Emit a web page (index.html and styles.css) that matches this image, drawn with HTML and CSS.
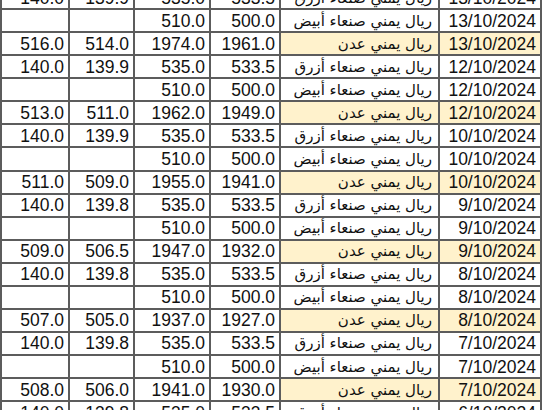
FILE: index.html
```html
<!DOCTYPE html>
<html lang="ar">
<head>
<meta charset="utf-8">
<link rel="stylesheet" href="styles.css">
</head>
<body>
<div class="sheet">
<table class="grid">
<colgroup>
<col class="c1"><col class="c2"><col class="c3"><col class="c4"><col class="c5"><col class="c6">
</colgroup>
<tbody>
<tr><td>140.0</td><td>139.9</td><td>535.0</td><td>533.5</td><td class="ar">ريال يمني صنعاء أزرق</td><td>13/10/2024</td></tr>
<tr><td></td><td></td><td>510.0</td><td>500.0</td><td class="ar">ريال يمني صنعاء أبيض</td><td>13/10/2024</td></tr>
<tr class="aden"><td>516.0</td><td>514.0</td><td>1974.0</td><td>1961.0</td><td class="ar">ريال يمني عدن</td><td>13/10/2024</td></tr>
<tr><td>140.0</td><td>139.9</td><td>535.0</td><td>533.5</td><td class="ar">ريال يمني صنعاء أزرق</td><td>12/10/2024</td></tr>
<tr><td></td><td></td><td>510.0</td><td>500.0</td><td class="ar">ريال يمني صنعاء أبيض</td><td>12/10/2024</td></tr>
<tr class="aden"><td>513.0</td><td>511.0</td><td>1962.0</td><td>1949.0</td><td class="ar">ريال يمني عدن</td><td>12/10/2024</td></tr>
<tr><td>140.0</td><td>139.9</td><td>535.0</td><td>533.5</td><td class="ar">ريال يمني صنعاء أزرق</td><td>10/10/2024</td></tr>
<tr><td></td><td></td><td>510.0</td><td>500.0</td><td class="ar">ريال يمني صنعاء أبيض</td><td>10/10/2024</td></tr>
<tr class="aden"><td>511.0</td><td>509.0</td><td>1955.0</td><td>1941.0</td><td class="ar">ريال يمني عدن</td><td>10/10/2024</td></tr>
<tr><td>140.0</td><td>139.8</td><td>535.0</td><td>533.5</td><td class="ar">ريال يمني صنعاء أزرق</td><td>9/10/2024</td></tr>
<tr><td></td><td></td><td>510.0</td><td>500.0</td><td class="ar">ريال يمني صنعاء أبيض</td><td>9/10/2024</td></tr>
<tr class="aden"><td>509.0</td><td>506.5</td><td>1947.0</td><td>1932.0</td><td class="ar">ريال يمني عدن</td><td>9/10/2024</td></tr>
<tr><td>140.0</td><td>139.8</td><td>535.0</td><td>533.5</td><td class="ar">ريال يمني صنعاء أزرق</td><td>8/10/2024</td></tr>
<tr><td></td><td></td><td>510.0</td><td>500.0</td><td class="ar">ريال يمني صنعاء أبيض</td><td>8/10/2024</td></tr>
<tr class="aden"><td>507.0</td><td>505.0</td><td>1937.0</td><td>1927.0</td><td class="ar">ريال يمني عدن</td><td>8/10/2024</td></tr>
<tr><td>140.0</td><td>139.8</td><td>535.0</td><td>533.5</td><td class="ar">ريال يمني صنعاء أزرق</td><td>7/10/2024</td></tr>
<tr><td></td><td></td><td>510.0</td><td>500.0</td><td class="ar">ريال يمني صنعاء أبيض</td><td>7/10/2024</td></tr>
<tr class="aden"><td>508.0</td><td>506.0</td><td>1941.0</td><td>1930.0</td><td class="ar">ريال يمني عدن</td><td>7/10/2024</td></tr>
<tr><td>140.0</td><td>139.8</td><td>535.0</td><td>533.5</td><td class="ar">ريال يمني صنعاء أزرق</td><td>6/10/2024</td></tr>
</tbody>
</table>
</div>
</body>
</html>
```

FILE: styles.css
```css
html, body {
  margin: 0;
  padding: 0;
  background: #ffffff;
  overflow: hidden;
}
.sheet {
  width: 547px;
  height: 410px;
  overflow: hidden;
}
.grid {
  margin-top: -15px;
  margin-left: 0;
  border-collapse: collapse;
  table-layout: fixed;
  width: 540px;
  font-family: "Liberation Sans", Arial, sans-serif;
  font-size: 17.5px;
  color: #111;
}
.c1 { width: 68px; }
.c2 { width: 65px; }
.c3 { width: 76px; }
.c4 { width: 70px; }
.c5 { width: 159px; }
.c6 { width: 102px; }
.grid td {
  height: 23.07px;
  padding: 0 4px 0 2px;
  box-sizing: border-box;
  border: 2px solid #5c5c5c;
  text-align: right;
  vertical-align: middle;
  line-height: 18px;
  white-space: nowrap;
  overflow: hidden;
}
.grid td.ar {
  font-family: "DejaVu Sans", sans-serif;
  font-size: 15px;
  direction: rtl;
  padding-right: 6px;
}
.aden td.ar,
.aden td:last-child {
  background: #fff2cc;
}
```
